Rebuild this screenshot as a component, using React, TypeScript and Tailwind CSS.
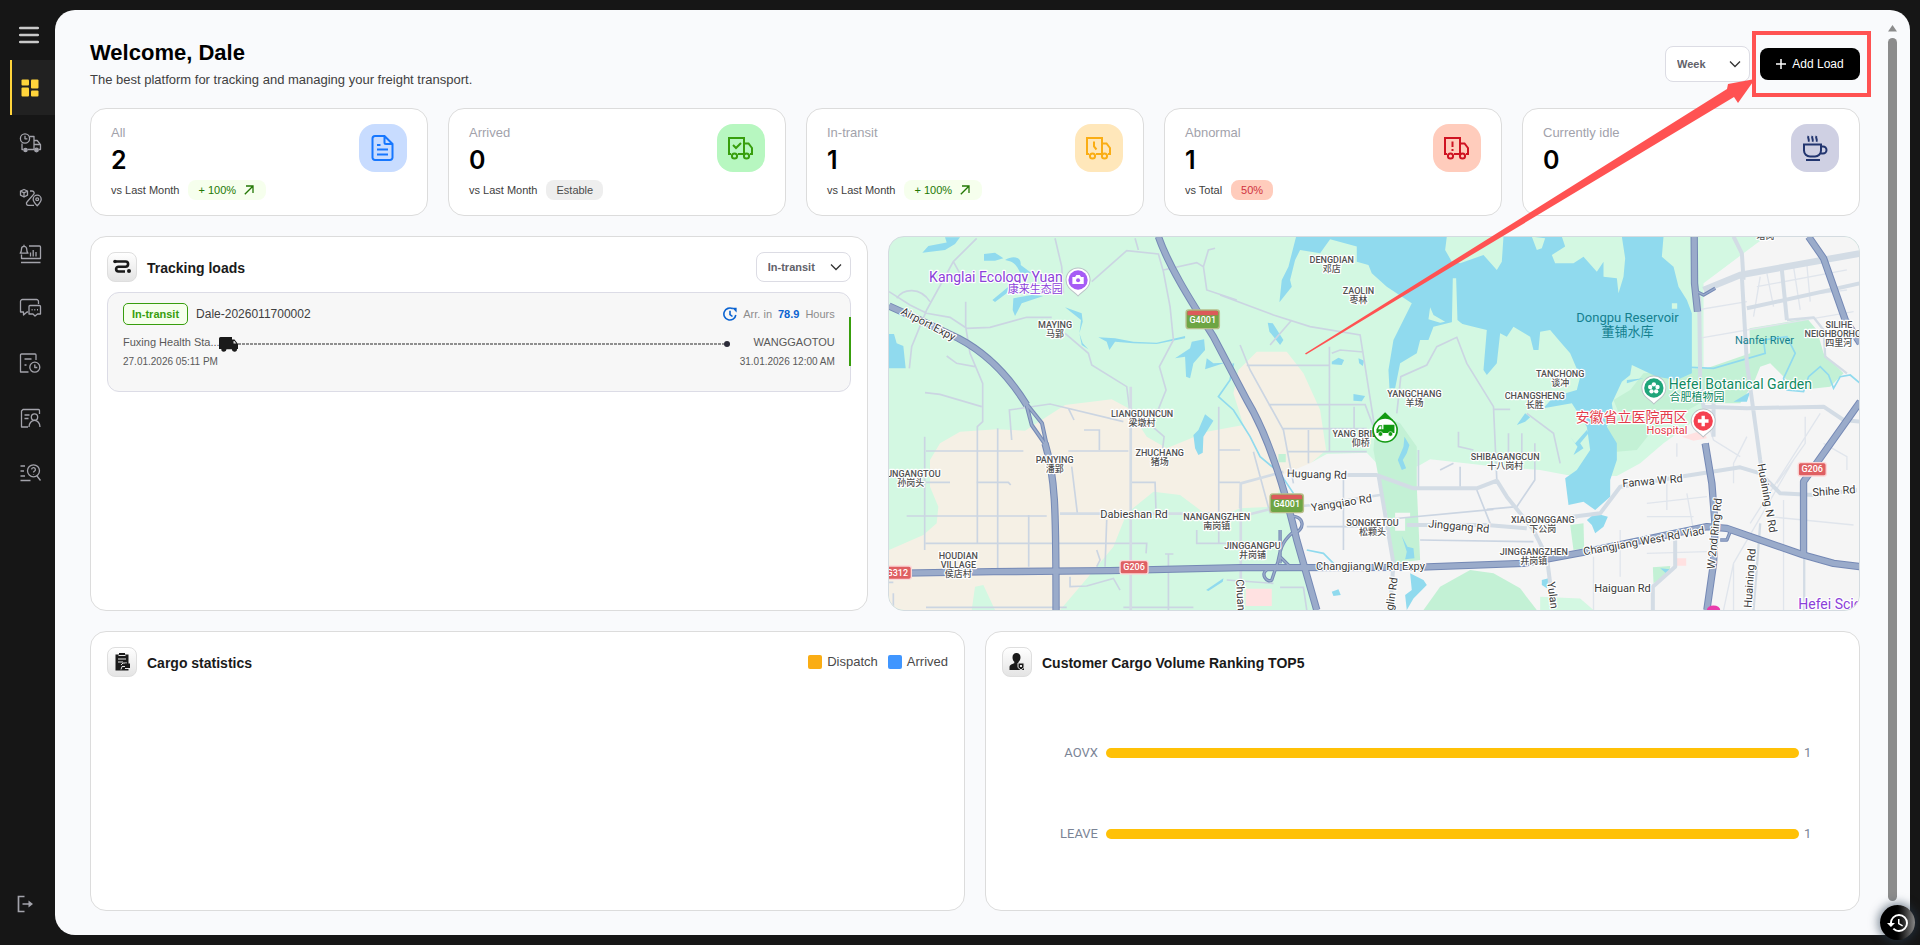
import type { ReactNode } from 'react';
import { MdHistory } from 'react-icons/md';

const navItems: { label: string; icon: ReactNode }[] = [
  {
    label: 'Dispatch',
    icon: (
      <>
        <circle cx="6" cy="6.5" r="4.6" />
        <path d="M6 3.8v3h2.4M10.5 4.5H15v13H8.5M3 11.5v6h1.5M15 8.5h3.2l3.3 4.2v4.8h-1.5M15 12.5h6" />
        <circle cx="6.5" cy="18" r="1.6" fill="currentColor" />
        <circle cx="17.5" cy="18" r="1.8" fill="currentColor" />
      </>
    ),
  },
  {
    label: 'Routes',
    icon: (
      <>
        <path d="M5 2.5 8.5 4v4.2L5 10 1.5 8.2V4zM1.5 4 5 5.8 8.5 4M5 5.8V10M11 4h2.2a2 2 0 0 1 1.4 3.4L8 15a2 2 0 0 0 1.4 3.4H15" />
        <path d="M18.2 18.8c-2.6-2.8-4-4.6-4-6.6a4 4 0 0 1 8 0c0 2-1.4 3.8-4 6.6z" />
        <circle cx="18.2" cy="12.2" r="1.4" />
      </>
    ),
  },
  {
    label: 'Alarm reports',
    icon: (
      <>
        <path d="M10 4h10.5a1 1 0 0 1 1 1v11.5H2.5v-4M2 20.5h19.5M11.5 10.5v4M14.2 8v6.5M17 10v4.5" />
        <path d="M1.2 11.2c1-1 1.3-1.800 1.300-4.200a2.600 2.600 0 0 1 5.200 0c0 2.400.3 3.200 1.300 4.200zM5 2.800v1.400" />
      </>
    ),
  },
  {
    label: 'Messages',
    icon: (
      <>
        <path d="M19.5 7V4.5a2 2 0 0 0-2-2h-14a2 2 0 0 0-2 2v10.500h3v3l3.500-3h1" />
        <path d="M11 8.5h9.5a1 1 0 0 1 1 1v7.500h-3l-2.500 2-2-2H10V9.500a1 1 0 0 1 1-1z" />
        <path d="M12.600 12.800h1M15.300 12.800h1M18 12.800h1" strokeWidth="1.600" />
      </>
    ),
  },
  {
    label: 'Orders',
    icon: (
      <>
        <path d="M17 8V3a1 1 0 0 0-1-1H2.500a1 1 0 0 0-1 1v17h8M5.500 7h7M5.500 13h2" />
        <circle cx="15.8" cy="15.2" r="5" />
        <path d="M15.800 12.500v3h2.500" />
      </>
    ),
  },
  {
    label: 'Customers',
    icon: (
      <>
        <path d="M20.500 7V3.500a1 1 0 0 0-1-1H4l-1.500 1.500V20H9M5.500 8h5M5.500 11.500h4" />
        <circle cx="15.5" cy="10" r="3.2" />
        <path d="M10 20c0-4 2.500-6.600 5.500-6.600s5.500 2.600 5.500 6.600" />
      </>
    ),
  },
  {
    label: 'Query',
    icon: (
      <>
        <path d="M1.500 4H6M1.500 9h3.500M1.500 14H6M1.500 18.500h10M18 14l3.500 4.500" />
        <circle cx="14.5" cy="8.8" r="6" />
        <path d="M12.600 7.400a1.900 1.900 0 1 1 2.600 1.900c-.6.300-.7.600-.7 1.200M14.500 12v.6" />
      </>
    ),
  },
];

const truck = (
  <>
    <path d="M4 20H2V4h15v16h-6M17 9.500h4.500L25 14v6h-2" />
    <circle cx="7.5" cy="22" r="2.6" />
    <circle cx="19.5" cy="22" r="2.6" />
    <path d="M11 20h6" />
  </>
);

interface Stat {
  label: string;
  value: number;
  compare?: string;
  pill?: string;
  pillClass?: string;
  arrow?: boolean;
  boxClass: string;
  icon: ReactNode;
}

const stats: Stat[] = [
  {
    label: 'All', value: 2, compare: 'vs Last Month', pill: '+ 100%', arrow: true,
    pillClass: 'bg-[#f6ffed] text-[#237804]', boxClass: 'bg-[#c8dcff] text-[#1677ff]',
    icon: <path d="M15.500 2H6a2.500 2.500 0 0 0-2.500 2.500v19A2.500 2.500 0 0 0 6 26h15a2.500 2.500 0 0 0 2.500-2.500V10zM15.500 2v6.500a1.500 1.500 0 0 0 1.500 1.500h6.500M8 11h3.500M8 15.500h11M8 20.500h11" />,
  },
  {
    label: 'Arrived', value: 0, compare: 'vs Last Month', pill: 'Estable',
    pillClass: 'bg-[#eeeeee] text-[#4b4b4b]', boxClass: 'bg-[#b7f7c0] text-[#389e0d]',
    icon: <>{truck}<path d="m6 11 3 3 5-5" /></>,
  },
  {
    label: 'In-transit', value: 1, compare: 'vs Last Month', pill: '+ 100%', arrow: true,
    pillClass: 'bg-[#f6ffed] text-[#237804]', boxClass: 'bg-[#ffe7ba] text-[#faad14]',
    icon: <>{truck}<path d="M9 7.500v5l2.500 3" /></>,
  },
  {
    label: 'Abnormal', value: 1, compare: 'vs Total', pill: '50%',
    pillClass: 'bg-[#ffccbc] text-[#cf3340]', boxClass: 'bg-[#ffccbc] text-[#cf1322]',
    icon: <>{truck}<path d="M9.500 7.500v5.500M9.500 15v2" /></>,
  },
  {
    label: 'Currently idle', value: 0, boxClass: 'bg-[#cfd0e3] text-[#22356f]',
    icon: (
      <>
        <path d="M3 10.500h17v6a6 6 0 0 1-6 6H9a6 6 0 0 1-6-6zM20 12.500h2a3 3 0 0 1 0 7h-2.800M5 26h14" />
        <path d="M7.500 2c-1.500 2 1.500 3.500 0 5.800M11.500 2c-1.500 2 1.500 3.500 0 5.800M15.500 2c-1.500 2 1.500 3.500 0 5.800" />
      </>
    ),
  },
];

const ranking = [
  { name: 'AOVX', count: 1 },
  { name: 'LEAVE', count: 1 },
];

function Sidebar() {
  return (
    <nav className="flex w-[55px] shrink-0 flex-col pl-[10px] text-[#a3a3ab]">
      <button aria-label="Toggle menu" className="flex h-[60px] items-center pt-[10px] pl-[9px] text-[#c9c9c9]">
        <svg className="h-[18px] w-5" viewBox="0 0 20 18" stroke="currentColor" strokeWidth="2.5" strokeLinecap="round">
          <path d="M1.200 2h17.600M1.200 9h17.600M1.200 16h17.600" />
        </svg>
      </button>
      <a href="#dashboard" aria-label="Dashboard" className="flex h-[55px] items-center border-l-2 border-[#ffd43b] bg-[#212121] pl-[9px] text-[#ffd43b]">
        <svg className="h-[18px] w-[18px]" viewBox="0 0 18 18" fill="currentColor">
          <rect x="0.5" y="0.5" width="7.5" height="6" rx="1" />
          <rect x="0.5" y="8.5" width="7.5" height="9" rx="1" />
          <rect x="10" y="0.5" width="7.5" height="9" rx="1" />
          <rect x="10" y="11.5" width="7.5" height="6" rx="1" />
        </svg>
      </a>
      {navItems.map(({ label, icon }) => (
        <a key={label} href={`#${label}`} aria-label={label} className="flex h-[55px] items-center pt-[2px] pl-[9px]">
          <svg className="h-[23px] w-[23px]" viewBox="0 0 23 23" fill="none" stroke="currentColor" strokeWidth="1.3" strokeLinejoin="round">
            {icon}
          </svg>
        </a>
      ))}
      <button aria-label="Log out" className="mt-auto mb-8 flex pl-[7px]">
        <svg className="h-[18px] w-[18px]" viewBox="0 0 18 18" fill="none" stroke="currentColor" strokeWidth="1.7">
          <path d="M7.500 1.500H1.500v15h6M5.500 9h9" />
          <path d="M11.500 5.500 16 9l-4.500 3.500z" fill="currentColor" stroke="none" />
        </svg>
      </button>
    </nav>
  );
}

function Dropdown({ label, options, className }: { label: string; options: string[]; className: string }) {
  return (
    <div className="relative">
      <select
        aria-label={label}
        className={`appearance-none rounded-lg border border-[#dcdce4] bg-white pl-[11px] text-[11px] font-bold text-[#62626a] ${className}`}
      >
        {options.map((o) => <option key={o}>{o}</option>)}
      </select>
      <svg className="pointer-events-none absolute top-1/2 right-[9px] h-3 w-3 -translate-y-1/2" viewBox="0 0 12 12" fill="none" stroke="#333" strokeWidth="1.3">
        <path d="m1 3.500 5 5 5-5" />
      </svg>
    </div>
  );
}

function StatCard({ stat }: { stat: Stat }) {
  return (
    <div className="flex min-h-[108px] justify-between rounded-2xl border border-[#dcdcdc] bg-white px-5 py-[15px]">
      <div>
        <p className="text-[13px] leading-[18px] text-[#a2a2ab]">{stat.label}</p>
        <p className="mb-[2px] font-[Inter,sans-serif] text-[25px] leading-9 font-semibold text-black">{stat.value}</p>
        {stat.compare && (
          <p className="flex h-5 items-center gap-[9px] text-[11px] text-[#404040]">
            {stat.compare}
            <span className={`flex h-5 items-center gap-2 rounded-lg px-[10px] ${stat.pillClass}`}>
              {stat.pill}
              {stat.arrow && (
                <svg className="mr-[2px] h-[10px] w-[10px]" viewBox="0 0 10 10" fill="none" stroke="currentColor" strokeWidth="1.3">
                  <path d="M.8 9.200 8.800 1.200M2 1h7v7" />
                </svg>
              )}
            </span>
          </p>
        )}
      </div>
      <div className={`flex h-12 w-12 items-center justify-center rounded-2xl ${stat.boxClass}`}>
        <svg className="h-7 w-7" viewBox="0 0 28 28" fill="none" stroke="currentColor" strokeWidth="2">
          {stat.icon}
        </svg>
      </div>
    </div>
  );
}

function PanelTitle({ icon, children }: { icon: ReactNode; children: ReactNode }) {
  return (
    <div className="flex items-center gap-[10px]">
      <span className="flex h-[30px] w-[30px] items-center justify-center rounded-lg border border-[#dedede] bg-linear-to-b from-white to-[#e4e4e4]">
        <svg className="h-[18px] w-[18px]" viewBox="0 0 18 18" fill="#1a1a1a">{icon}</svg>
      </span>
      <h2 className="pt-px text-sm leading-5 font-bold text-[#1a1a1a]">{children}</h2>
    </div>
  );
}

function TrackingPanel() {
  return (
    <section className="rounded-2xl border border-[#dcdcdc] bg-white px-4 py-[15px]">
      <div className="mb-[10px] flex justify-between">
        <PanelTitle
          icon={
            <>
              <path d="M3 3.500h9.500a2.500 2.500 0 0 1 0 5.200h-7a2.300 2.300 0 0 0 0 4.800H12" fill="none" stroke="#1a1a1a" strokeWidth="2.6" />
              <circle cx="2" cy="3.5" r="1.8" />
              <circle cx="16" cy="13" r="2" />
            </>
          }
        >
          Tracking loads
        </PanelTitle>
        <Dropdown label="Load status" options={['In-transit', 'Arrived', 'Abnormal']} className="h-[30px] w-[95px]" />
      </div>
      <article className="relative min-h-[100px] rounded-xl border border-[#dcdce6] bg-[#f7f7f7] px-[15px] py-[10px] text-[#595959]">
        <div className="flex items-center justify-between">
          <div className="flex items-center gap-2">
            <span className="flex h-[22px] items-center rounded-[5px] border border-[#389e0d] bg-[#f6ffed] px-2 text-[11px] font-bold text-[#389e0d]">In-transit</span>
            <span className="text-xs text-[#404040]">Dale-2026011700002</span>
          </div>
          <div className="flex items-center gap-[6px] text-[11px] text-[#8c8c8c]">
            <svg className="h-[14px] w-[14px]" viewBox="0 0 14 14" fill="none" stroke="#0b63d1" strokeWidth="1.6">
              <path d="M9.800 1.800A6 6 0 1 0 12.800 8M7 3.800V7.500l2.500 2" />
              <path d="M9 .8h4.600V5.500z" fill="#0b63d1" stroke="none" />
            </svg>
            <span>Arr. in</span>
            <b className="text-[#0b63d1]">78.9</b>
            <span>Hours</span>
          </div>
        </div>
        <div className="mt-[7px] flex">
          <div className="w-24 text-[11px] leading-5 whitespace-nowrap">
            <p>Fuxing Health Sta...</p>
            <p className="text-[10px] leading-5">27.01.2026 05:11 PM</p>
          </div>
          <div className="flex h-5 flex-1 items-center pt-1">
            <svg className="h-[15px] w-[19px]" viewBox="0 0 19 15" fill="#1a1a1a">
              <path d="M0 1.500A1.500 1.500 0 0 1 1.500 0H13v2.500h2.500L19 7v5h-1a2.600 2.600 0 0 1-5.200.3H7.500A2.600 2.600 0 0 1 2.300 12H0z" />
              <path d="M14.500 4h1l1.800 2.500h-2.800z" fill="#ddd" />
            </svg>
            <span className="h-[2px] flex-1 bg-[repeating-linear-gradient(90deg,#8f8f8f_0_3px,transparent_3px_4px)]" />
            <span className="h-[6px] w-[6px] rounded-full bg-[#2b2b38]" />
          </div>
          <div className="w-[105px] text-right text-[11px] leading-5">
            <p>WANGGAOTOU</p>
            <p className="text-[10px] leading-5 whitespace-nowrap">31.01.2026 12:00 AM</p>
          </div>
        </div>
        <span className="absolute top-6 -right-px h-[49px] w-[2px] bg-[#389e0d]" />
      </article>
    </section>
  );
}

const places: { x: number; y: number; lines: string[] }[] = [
  { x: 525, y: 294, lines: ['MAYING', '马郢'] },
  { x: 786, y: 561, lines: ['LIANGDUNCUN', '梁墩村'] },
  { x: 839, y: 678, lines: ['ZHUCHANG', '猪场'] },
  { x: 524, y: 699, lines: ['PANYING', '潘郢'] },
  { x: 92, y: 741, lines: ['SUNGANGTOU', '孙岗头'] },
  { x: 235, y: 987, lines: ['HOUDIAN', 'VILLAGE', '侯店村'] },
  { x: 1010, y: 870, lines: ['NANGANGZHEN', '南岗镇'] },
  { x: 1117, y: 956, lines: ['JINGGANGPU', '井岗铺'] },
  { x: 1355, y: 99, lines: ['DENGDIAN', '邓店'] },
  { x: 1435, y: 193, lines: ['ZAOLIN', '枣林'] },
  { x: 1603, y: 501, lines: ['YANGCHANG', '羊场'] },
  { x: 1442, y: 621, lines: ['YANG BRIDGE', '仰桥'] },
  { x: 1477, y: 888, lines: ['SONGKETOU', '松颗头'] },
  { x: 1875, y: 690, lines: ['SHIBAGANGCUN', '十八岗村'] },
  { x: 2040, y: 441, lines: ['TANCHONG', '谈冲'] },
  { x: 1964, y: 507, lines: ['CHANGSHENG', '长胜'] },
  { x: 1988, y: 879, lines: ['XIAGONGGANG', '下公岗'] },
  { x: 1961, y: 975, lines: ['JINGGANGZHEN', '井岗镇'] },
  { x: 2876, y: 294, lines: ['SILIHE', 'NEIGHBORHOOD', '四里河'] },
  { x: 2656, y: 0, lines: ['', '塔岗'] },
];

const roadNames: { x: number; y: number; r: number; text: string }[] = [
  { x: 140, y: 292, r: 27, text: 'Airport Expy' },
  { x: 762, y: 864, r: 0, text: 'Dabieshan Rd' },
  { x: 1310, y: 744, r: 2, text: 'Huguang Rd' },
  { x: 1386, y: 830, r: -9, text: 'Yangqiao Rd' },
  { x: 1735, y: 900, r: 5, text: 'Jinggang Rd' },
  { x: 1471, y: 1021, r: 0, text: 'Changjiang W Rd Expy' },
  { x: 2318, y: 764, r: -5, text: 'Fanwa W Rd' },
  { x: 2293, y: 944, r: -10, text: 'Changjiang West Rd Viad' },
  { x: 2227, y: 1086, r: 0, text: 'Haiguan Rd' },
  { x: 2862, y: 794, r: -4, text: 'Shihe Rd' },
  { x: 2514, y: 912, r: -84, text: 'W 2nd Ring Rd' },
  { x: 2650, y: 806, r: 80, text: 'Huaining N Rd' },
  { x: 2620, y: 1045, r: -86, text: 'Huaining Rd' },
  { x: 1072, y: 1126, r: 87, text: 'Chuangxin' },
  { x: 1542, y: 1120, r: -82, text: 'Tonglin Rd' },
  { x: 2010, y: 1120, r: 82, text: 'Yulan Rd' },
];

const shields = [
  { x: 968, y: 268, text: 'G4001', green: true },
  { x: 1220, y: 820, text: 'G4001', green: true },
  { x: 52, y: 1028, text: 'G312', green: false },
  { x: 762, y: 1012, text: 'G206', green: false },
  { x: 2796, y: 718, text: 'G206', green: false },
];

function Pin({ x, y, color, children }: { x: number; y: number; color: string; children: ReactNode }) {
  return (
    <g transform={`translate(${x} ${y})`}>
      <path d="M0 48C-12 34-36 26-36 0a36 36 0 0 1 72 0C36 26 12 34 0 48z" fill="#fff" stroke="#b9c2c6" strokeWidth="3" />
      <circle r="29" fill={color} />
      {children}
    </g>
  );
}

// Map units are thirds of a pixel.
function FleetMap() {
  return (
    <section aria-label="Fleet map" className="min-w-0 overflow-hidden rounded-2xl border border-[#d4dbe0] bg-[#d3f8e2]">
      <svg
        className="block h-full w-full font-[Roboto,'Noto_Sans_CJK_SC',sans-serif]"
        viewBox="27 21 2910 1119"
        preserveAspectRatio="xMidYMid slice"
        fill="none"
      >
        {/* built-up land */}
        <path fill="#f5f0e5" d="M27 960 130 915 170 880 175 830 150 770V690L180 640 240 605 350 598 435 602 500 560 555 525 695 508 745 535 800 620 860 655 980 605 1090 585 1060 490 1075 420 1130 365H1220L1270 430 1320 540 1338 660 1280 710 1210 740 1180 830 1080 835 1000 870 900 795 820 785 740 850 700 950 625 1040 540 1140H345L310 1065 285 1070 275 1140H27z" />
        <path fill="#f5f5f5" d="M1205 735 1290 700 1340 672 1460 668 1490 700 1500 760 1620 705 1650 688 1830 708 1980 720 2060 735 2210 738 2280 700 2350 640 2420 590 2470 540V160L2630 40 2660 20H2940V1140H1310L1260 950 1230 850z" />
        <g fill="#c3f1d5">
          <path d="M1485 600 1510 560 1560 580 1610 650V770L1620 990 1540 1000 1520 850 1495 740 1480 660z" />
          <path d="M1630 1140 1680 1070 1770 1020 1840 1030 1920 1075 1970 1140z" />
          <path d="M2608 295 2700 280 2780 265 2810 300 2830 370 2890 430 2850 470 2760 480 2720 450 2670 400 2640 410 2620 460 2580 520H2460L2350 580 2310 610 2270 660 2210 665 2170 600 2220 560 2200 510 2250 480 2290 430 2480 415 2610 370z" />
          <path d="M2070 885 2110 880 2112 955 2080 960z" />
          <path d="M2318 1012 2370 1008 2368 1030 2320 1060zM1195 672h22v25h-22z" />
        </g>
        <path fill="#d3f8e2" d="M1980 1100 2100 1105 2140 1140H1980z" />
        <path fill="#ffe1e1" d="M1097 1076h78v52h-78zM2405 620 2470 600 2480 625 2440 632zM2390 985h28v22h-28z" />
        <path fill="#f5f5f5" d="M1545 848h45v16h-15v38h-30z" />

        {/* water */}
        <g fill="#90daee">
          <path d="M1248 20H1700L1695 60 1715 95 1740 100 1810 75 1850 120 1865 95 1870 20H2350L2345 80 2380 110 2395 170 2420 210 2435 250V430L2390 450 2330 440 2255 405 2250 435 2225 455 2195 520 2200 555 2180 590 2210 640 2210 690 2190 750V800L2145 840 2110 815 2065 825 2055 745 2090 720 2130 660 2120 590 2075 520 1990 535 2020 500 2090 480 2100 440 2070 370 2040 335 2010 300 1980 305 1975 360 1960 360 1950 320 1900 290 1880 320 1860 310 1850 400 1820 435 1810 420 1820 300 1780 290 1720 275 1660 290 1645 330 1620 330 1610 370 1560 400 1545 475H1528L1525 420 1540 330 1595 220 1520 170 1475 130 1465 105 1430 95V50L1350 28 1320 70 1260 60 1245 90 1230 150 1235 170 1198 217 1205 150 1225 110z" />
          <path d="M27 312H42L50 340 70 348 77 415H27zM127 68 145 48 200 38 195 22H240L225 42 195 60zM312 72 345 68 370 85 345 92H312zM375 90C400 75 425 82 422 105L455 130 420 128C405 95 395 95 375 90zM337 210 385 170 380 190 345 216zM400 205 455 195 490 198 425 220 405 258 398 240zM555 232 605 250 608 275 598 310 608 340 625 358 605 345 598 310 603 270zM655 322 705 325 760 335 830 338 915 318 915 325 830 342 760 340 705 335 688 360 680 335zM885 385 930 355 935 335 972 328 975 360 940 400 930 445 918 440 915 380zM975 418 980 385 1000 400 1035 398zM940 615 955 600 975 553 1000 572 970 620 968 668 955 675 945 655zM978 1080 1030 1045 1028 1055 985 1083z" />
          <path d="M1163 278 1178 280 1210 330 1200 345 1168 305zM1355 395 1375 383 1392 390 1385 405 1355 403zM1435 385 1452 392 1448 408 1437 400zM1420 492 1455 498 1445 514 1420 512zM1573 620 1588 645 1580 670 1568 690 1578 715 1565 720 1553 690 1570 650zM1565 918 1582 950 1600 955 1603 985 1575 988 1580 965zM1590 1030 1630 1050 1640 1065 1600 1105 1580 1140 1575 1095 1595 1080zM1910 585 1935 550 1950 562 1935 575zM1355 1085 1375 1078 1382 1095 1360 1098zM2120 870 2145 850 2183 860 2170 890 2145 910 2135 885zM2340 1015 2368 1018 2360 1032zM2240 450 2290 445 2240 460zM2560 515 2610 485 2600 515zM1985 1050 2005 1045 2000 1075 1985 1065z" />
          <path d="M2070 620 2085 640 2120 600 2125 610 2100 640 2110 655 2080 675 2092 650z" />
        </g>
        <path fill="#d3f8e2" d="M2045 20 2055 50 2015 75 2025 100 2080 100 2110 80 2150 125 2170 95V140L2210 145 2215 190 2230 140 2235 85 2225 20zM1955 20 1995 25 1985 55 1970 60zM1718 145H1728L1732 270 1750 285 1715 290zM1650 232 1660 255 1695 275 1680 278 1645 268zM2375 220h16v16h-16z" />
        <path stroke="#90daee" strokeWidth="5" d="M2432 412 2500 415 2655 370 2650 330 2720 320 2745 370 2710 445 2720 480 2770 485 2785 440 2820 410 2845 435 2860 475 2880 440 2910 435 2940 460M1060 400 1050 450 1015 500 1060 540 1110 620 1140 680 1200 730 1240 790M1280 960 1330 970 1360 1000" />

        {/* local streets */}
        <g stroke="#cbd5e2" strokeWidth="5">
          <path d="M290 25 220 95 140 240 95 350 88 415M220 95 245 140M27 185 90 225 140 250 210 262 260 295 330 292 440 262 515 262M50 205C70 175 120 170 150 215M257 215V290L270 370 308 460V575L292 590V940M525 25 545 110 550 190M635 155 740 62 835 72 850 125 870 230 880 330 838 410 858 480 830 550M765 25 775 60M850 120 950 98 970 110 985 60 1005 55M970 110 980 180 1070 210M555 310 625 370 635 405 740 470 755 590M200 378 230 400 285 410M135 488 180 493 305 530M395 630 388 540 510 522 730 575M565 535 582 570M800 575 852 620 848 655" />
          <path d="M134 620V960M138 663H430M565 663H745M353 595V1020M290 757H385L392 765M138 757H210M80 858H500M137 940H800L798 970M446 855V1010M575 710 592 850M612 600H658V660M755 757H825L828 850M1016 660H1080M1016 530V940M1016 757H1080M950 900V940H1080M680 870 675 1010M570 1040V1070L620 1068 700 1045 720 1080M865 970V1140M855 972H880M138 1132H560M730 1132H940M650 960 660 990 650 1010M40 1090V1140M27 1057H40" />
          <path d="M1020 195 1180 255 1290 290 1440 315 1485 600M1235 270 1170 345M1080 345 1110 420 1210 600 1240 760M1100 406H1350M1348 350V665M1355 370 1380 360 1450 366M1165 524H1455L1480 590M1205 596H1460M1220 665H1460M1422 530V595M1285 600V700M1550 550 1562 440 1640 405 1670 350 1730 322 1760 400 1840 530 1850 750M1120 665 1170 850M1735 605V650L1780 660M1885 610V670M1925 610V700M1964 640V750L1910 830 1820 838M1842 538 1890 538M1940 550 2020 610 2040 700M1615 660V780M1740 710V770M1790 780 1830 880" />
          <path d="M1280 890H1440M1390 740V960M1500 870 1840 838M1620 930 1960 935M1200 1072H1270L1280 1140M1040 1050 1180 1060M1680 720 1720 700" />
        </g>
        <g stroke="#e0e5ec" strokeWidth="4">
          <path d="M2455 325 2920 245M2450 240 2600 215M2630 170 2900 120M2620 260 2640 140M2680 230 2660 130M2760 240 2740 110M2790 215 2780 105M2820 190 2900 180M2600 620 2560 700V760M2775 560V640L2690 760M2300 820 2480 800M2300 860H2440M2360 760V840M2420 790 2440 900M2390 640V680M2710 810V1140M2140 980V1140M2220 900V1040M2300 970 2480 965M2560 1000V1140M2670 860 2920 885M2830 640 2900 680V720M2740 690 2560 1000 2530 1140M2820 550 2610 880M2470 540 2500 630 2580 680" />
        </g>

        {/* secondary roads */}
        <g stroke="#d3dce5" strokeWidth="12" strokeLinejoin="round">
          <path d="M752 470V1140M540 851H1000" strokeWidth="8" />
          <path d="M1080 835 1082 760 1210 725M1082 760V1140M1100 855 1180 835 1300 825 1500 795" strokeWidth="8" />
          <path d="M1400 735H1490L1600 775H1790L1850 752 1880 800 1960 900 2000 980 2010 1060M1495 735 1540 1000 1530 1140M1580 885H1820L1940 895M2000 870 2160 850 2220 770 2400 740 2580 712 2640 730 2700 790 2800 795 2930 780M2318 1140V1070L2385 1010V930M1955 895 2090 860" />
          <path d="M2470 180 2580 135 2940 70" strokeWidth="20" />
          <path d="M2457 200 2460 460 2470 530 2600 535 2830 530 2890 570 2940 575M2585 140 2600 400 2640 690 2660 800M2560 20 2585 70 2590 150M2705 120 2720 270M2600 235 2940 160M2500 520V620" />
          <path d="M2720 270 2800 262 2830 300 2835 380 2900 430M2772 980V1140M2640 880 2620 1140" strokeWidth="7" />
        </g>

        {/* expressways */}
        {[
          { color: '#7589b5', w: 22 },
          { color: '#9aabca', w: 16 },
        ].map(({ color, w }) => (
          <g key={w} stroke={color} strokeWidth={w} strokeLinejoin="round">
            <path d="M27 228 120 270 235 325C340 380 400 460 440 525M495 640C525 740 528 820 528 1140" />
            <path d="M438 520 486 580 500 645M438 520 455 585 497 645" strokeWidth={w - 10} />
            <path d="M835 20C870 120 950 240 1000 320L1100 510C1160 610 1210 760 1250 930L1310 1140" />
            <path d="M27 1030 340 1025 690 1022 1080 1013 1600 1012 1930 1000 2120 965 2480 890 2540 895 2640 930 2770 975 2860 1000 2940 1010" />
            <path d="M2442 20 2443 160 2452 245M2785 20 2830 85 2895 270 2940 340M2940 515 2830 670 2770 755V980" />
            <path d="M2475 640 2495 760 2505 890 2500 1000 2480 1140" />
            <path d="M1225 860C1275 850 1280 905 1235 910C1190 950 1200 990 1190 1005L1175 1050C1160 1060 1140 1030 1160 1020M1200 900V1000M1200 980 1230 1010M2440 180 2470 195 2505 175M2550 905 2540 930 2520 930" strokeWidth={w - 12} />
          </g>
        ))}

        {/* labels */}
        <g textAnchor="middle" stroke="#fff" strokeWidth="7" strokeLinejoin="round" className="[paint-order:stroke]">
          <g fill="#505050" fontSize="27" fontWeight="500">
            {places.map((p) =>
              p.lines.map((line, i) => (
                <text key={line + i} x={p.x} y={p.y + i * 27}>{line}</text>
              )),
            )}
          </g>
          <g fill="#3a3a3a" fontSize="33">
            {roadNames.map((r) => (
              <text key={r.text} transform={`translate(${r.x} ${r.y}) rotate(${r.r})`}>{r.text}</text>
            ))}
          </g>
          <g fill="#8b41d9" textAnchor="end">
            <text x="548" y="156" fontSize="42">Kanglai Ecology Yuan</text>
            <text x="548" y="189" fontSize="33">康来生态园</text>
          </g>
          <g fill="#0f8a5f" textAnchor="start">
            <text x="2366" y="477" fontSize="42">Hefei Botanical Garden</text>
            <text x="2368" y="513" fontSize="33">合肥植物园</text>
          </g>
          <g fill="#e33b4b" textAnchor="end">
            <text x="2422" y="577" fontSize="42">安徽省立医院西区</text>
            <text x="2422" y="611" fontSize="33">Hospital</text>
          </g>
          <text x="2754" y="1136" fontSize="42" fill="#8b41d9" textAnchor="start">Hefei Science</text>
        </g>
        <g textAnchor="middle" fill="#14808f">
          <text x="2242" y="275" fontSize="39">Dongpu Reservoir</text>
          <text x="2242" y="317" fontSize="39">董铺水库</text>
          <text x="2653" y="341" fontSize="33">Nanfei River</text>
        </g>

        {shields.map((s) => (
          <g key={s.x} transform={`translate(${s.x} ${s.y})`}>
            {s.green ? (
              <>
                <rect x="-50" y="-28" width="100" height="56" rx="8" fill="#6ea544" stroke="#b8bd8a" strokeWidth="4" />
                <path d="M-46-12v-9a5 5 0 0 1 5-5h82a5 5 0 0 1 5 5v9z" fill="#dc5a5a" />
              </>
            ) : (
              <rect x="-42" y="-20" width="84" height="40" rx="7" fill="#df5f62" stroke="#fbd8d8" strokeWidth="4" />
            )}
            <text y={s.green ? 12 : 9} textAnchor="middle" fill="#fff" fontSize="27" fontWeight="500">{s.text}</text>
          </g>
        ))}

        <Pin x={594} y={150} color="#a65cf5">
          <path d="M-17-9h8l4-6H5l4 6h8v21h-34z" fill="#fff" />
          <circle cy="1" r="6" fill="#a65cf5" />
        </Pin>
        <Pin x={2321} y={474} color="#1fa57a">
          <g fill="#fff">
            <circle cy="-11" r="6.5" />
            <circle cx="11" cy="-3" r="6.5" />
            <circle cx="7" cy="10" r="6.5" />
            <circle cx="-7" cy="10" r="6.5" />
            <circle cx="-11" cy="-3" r="6.5" />
          </g>
        </Pin>
        <Pin x={2469} y={573} color="#f5404f">
          <path d="M-5-16H5V-5h11V5H5v11H-5V5h-11V-5H-5z" fill="#fff" />
        </Pin>
        <path d="M2480 1140a20 14 0 0 1 40 0z" fill="#e93cac" />

        {/* vehicle */}
        <g transform="translate(1515 600)">
          <path d="M0-53 24-30H-24z" fill="#129a12" />
          <circle r="36" fill="#fff" stroke="#129a12" strokeWidth="5" />
          <path d="M-5-16H28V9H-26V-2l7-12h10v12h4z" fill="#129a12" />
          <path d="M-21-2-16-11h5v9z" fill="#fff" />
          <circle cx="-14" cy="12" r="7" fill="#129a12" stroke="#fff" strokeWidth="2" />
          <circle cx="16" cy="12" r="7" fill="#129a12" stroke="#fff" strokeWidth="2" />
        </g>
      </svg>
    </section>
  );
}

function CargoPanel() {
  return (
    <section className="rounded-2xl border border-[#dcdcdc] bg-white px-4 py-[15px]">
      <div className="flex items-center justify-between">
        <PanelTitle
          icon={
            <>
              <path d="M2.500 1.500H6V0h6v1.500h3.500V17.500H2.500z" />
              <path d="M5.500 2.500h7M5 6h8M5 9h5M8 12l2-2h4M8 16.500l1-3h3M12 15.500h4" stroke="#e4e4e4" strokeWidth="1" fill="none" />
              <path d="M12 10.500h5V15h-5z" />
            </>
          }
        >
          Cargo statistics
        </PanelTitle>
        <div className="flex items-center gap-[10px] text-[13px] text-[#4a4a4a]">
          <span className="flex items-center gap-[5px]"><i className="h-[14px] w-[14px] rounded-[2px] bg-[#faad14]" />Dispatch</span>
          <span className="flex items-center gap-[5px]"><i className="h-[14px] w-[14px] rounded-[2px] bg-[#4096ff]" />Arrived</span>
        </div>
      </div>
    </section>
  );
}

function RankingPanel() {
  const max = Math.max(...ranking.map((r) => r.count));
  return (
    <section className="flex flex-col rounded-2xl border border-[#dcdcdc] bg-white px-4 py-[15px]">
      <PanelTitle
        icon={
          <>
            <path d="M8.500 0C11 0 12.500 1.800 12.500 4.300c0 2-.8 3.600-1.800 4.500v1.400c2.600.8 5.300 1.600 5.300 4.300V17H1.500v-2.500c0-2.700 2.300-3.500 4.800-4.300V8.800C5.300 7.900 4.500 6.300 4.500 4.300 4.500 1.800 6 0 8.500 0z" />
            <path d="M10 10h6v4.500l-3 2.500-3-2.500z" stroke="#e4e4e4" />
            <path d="M12 12h2v2h-2z" fill="#e4e4e4" />
          </>
        }
      >
        Customer Cargo Volume Ranking TOP5
      </PanelTitle>
      <ul className="mt-[66px] flex flex-col gap-[61px] pr-[26px] pl-9 font-[Roboto,sans-serif] text-[13px] text-[#7b8496]">
        {ranking.map((r) => (
          <li key={r.name} className="flex h-5 items-center">
            <span className="mr-2 w-[60px] text-right">{r.name}</span>
            <span className="flex-1">
              <span className="block h-[10px] rounded-full bg-[#ffc107]" style={{ width: `${(r.count / max) * 100}%` }} />
            </span>
            <span className="w-[18px] pl-[5px]">{r.count}</span>
          </li>
        ))}
      </ul>
    </section>
  );
}

export default function App() {
  return (
    <div className="relative flex min-h-screen bg-[#161616] py-[10px] pr-[10px] font-['Liberation_Sans',Arial,sans-serif]">
      <div className="-my-[10px] flex">
        <Sidebar />
      </div>
      <main className="flex min-w-0 flex-1 rounded-[20px] bg-[#f9fafc]">
        <div className="flex min-w-0 flex-1 flex-col gap-5 pt-[26px] pr-[28px] pb-6 pl-[35px]">
          <header className="-mb-[2px] flex items-center justify-between">
            <div>
              <h1 className="text-[22px] leading-[34px] font-bold text-black">Welcome, Dale</h1>
              <p className="text-[13px] leading-5 text-[#404040]">The best platform for tracking and managing your freight transport.</p>
            </div>
            <div className="flex items-center gap-[10px] pt-[2px]">
              <Dropdown label="Period" options={['Week', 'Month', 'Year']} className="h-9 w-[85px]" />
              <button className="flex h-8 w-[100px] items-center justify-center gap-[6px] rounded-lg bg-black text-xs text-white">
                <svg className="h-[10px] w-[10px]" viewBox="0 0 10 10" stroke="currentColor" strokeWidth="1.5"><path d="M5 0v10M0 5h10" /></svg>
                Add Load
              </button>
            </div>
          </header>
          <div className="grid grid-cols-5 gap-5">
            {stats.map((s) => <StatCard key={s.label} stat={s} />)}
          </div>
          <div className="grid h-[375px] grid-cols-[4fr_5fr] gap-5">
            <TrackingPanel />
            <FleetMap />
          </div>
          <div className="grid min-h-[280px] flex-1 grid-cols-2 gap-5">
            <CargoPanel />
            <RankingPanel />
          </div>
        </div>
        <div aria-hidden="true" className="flex w-[22px] flex-col items-start pt-[15px] pb-[34px]">
          <svg className="mb-[6px] h-[7px] w-[9px]" viewBox="0 0 9 7" fill="#8c8c8c"><path d="M4.500 0 9 6.500H0z" /></svg>
          <span className="w-[9px] flex-1 rounded-full bg-[#8c8c8c]" />
        </div>
      </main>

      {/* callout */}
      <div className="pointer-events-none absolute top-[31px] right-[49px] h-[66px] w-[119px] border-4 border-[#ff5252]" />
      <svg className="pointer-events-none absolute top-[79px] right-[165px] h-[276px] w-[450px]" viewBox="0 0 450 276" fill="#ff5252">
        <path d="M0 274.500 422 10 423 5 450 0 433 24 429 18 1 275.500z" />
      </svg>

      <button
        aria-label="History"
        className="absolute right-[5px] bottom-[5px] flex h-[35px] w-[35px] items-center justify-center rounded-full bg-linear-to-r from-black from-40% to-[#888] text-white shadow-[0_0_10px_2px_rgba(40,60,80,0.6)]"
      >
        <MdHistory className="h-6 w-6" />
      </button>
    </div>
  );
}
